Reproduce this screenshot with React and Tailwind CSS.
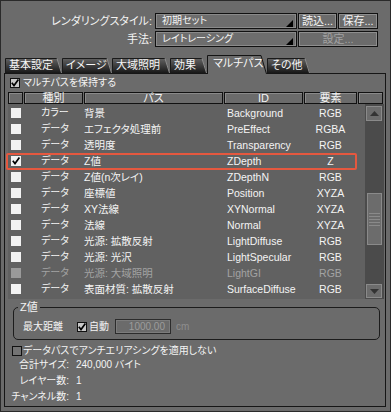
import React from "react";

const rows = [
  { kind: "カラー", pass: "背景", id: "Background", el: "RGB" },
  { kind: "データ", pass: "エフェクタ処理前", id: "PreEffect", el: "RGBA" },
  { kind: "データ", pass: "透明度", id: "Transparency", el: "RGB" },
  { kind: "データ", pass: "Z値", id: "ZDepth", el: "Z", checked: true },
  { kind: "データ", pass: "Z値(n次レイ)", id: "ZDepthN", el: "RGB" },
  { kind: "データ", pass: "座標値", id: "Position", el: "XYZA" },
  { kind: "データ", pass: "XY法線", id: "XYNormal", el: "XYZA" },
  { kind: "データ", pass: "法線", id: "Normal", el: "XYZA" },
  { kind: "データ", pass: "光源: 拡散反射", id: "LightDiffuse", el: "RGB" },
  { kind: "データ", pass: "光源: 光沢", id: "LightSpecular", el: "RGB" },
  { kind: "データ", pass: "光源: 大域照明", id: "LightGI", el: "RGB", disabled: true },
  { kind: "データ", pass: "表面材質: 拡散反射", id: "SurfaceDiffuse", el: "RGB" },
];

const tabs = [
  { label: "基本設定", w: 57, cls: "w-[57px]" },
  { label: "イメージ", w: 50, cls: "w-[50px]" },
  { label: "大域照明", w: 58, cls: "w-[58px]" },
  { label: "効果", w: 37, cls: "w-[37px]" },
  { label: "マルチパス", w: 60, cls: "w-[60px]", active: true },
  { label: "その他", w: 43, cls: "w-[43px]" },
];

function CheckMark() {
  return (
    <svg width="10" height="10" viewBox="0 0 10 10" className="block">
      <path d="M1.8 4.8 L4 7.6 L8.4 1.6" fill="none" stroke="#000" strokeWidth="1.7" />
    </svg>
  );
}

function CheckBox({ checked }) {
  return (
    <div className="h-[10px] w-[10px] shrink-0 border border-[#111] bg-[#c9c9c9]">
      {checked ? (
        <div className="-ml-[1px] -mt-[1px]">
          <CheckMark />
        </div>
      ) : null}
    </div>
  );
}

function EmptyBox() {
  return <div className="h-[10px] w-[10px] shrink-0 border border-[#111] bg-[#737373]" />;
}

function ListBox({ checked, disabled }) {
  return (
    <div className={disabled ? "h-[10px] w-[10px] bg-[#9a9a9a]" : "h-[10px] w-[10px] bg-[#f2f2f2]"}>
      {checked ? <CheckMark /> : null}
    </div>
  );
}

function Btn({ className, children, disabled }) {
  return (
    <div
      className={
        "flex h-[16px] items-center justify-center border border-[#111] bg-[#6b6b6b] shadow-[inset_0_0_0_1px_#8e8e8e] " +
        (disabled ? "text-[#a2a2a2] " : "") +
        className
      }
    >
      {children}
    </div>
  );
}

function Dropdown({ text }) {
  return (
    <div className="ml-[2px] flex h-[16px] w-[142px] items-center justify-between border border-[#111] bg-[#6d6d6d] pl-[6px] pr-[3px] text-[10px] shadow-[inset_0_0_0_1px_#8a8a8a]">
      <span>{text}</span>
      <svg width="7" height="7" viewBox="0 0 7 7" className="mt-[5px] block">
        <path d="M7 0 L7 7 L0 7 Z" fill="#000" />
      </svg>
    </div>
  );
}

function Tab({ t }) {
  const h = t.active ? 19 : 15;
  return (
    <div
      className={
        "relative shrink-0 " +
        t.cls +
        (t.active ? " z-10 -mb-[1px] h-[19px] pl-[6px]" : " h-[15px] pl-[4px]")
      }
    >
      <svg width={t.w} height={h} viewBox={`0 0 ${t.w} ${h}`} className="absolute left-0 top-0 block">
        <defs>
          <linearGradient id="tg" x1="0" y1="0" x2="0" y2="1">
            <stop offset="0" stopColor="#646464" />
            <stop offset="1" stopColor="#181818" />
          </linearGradient>
        </defs>
        {t.active ? (
          <>
            <path d={`M0 ${h} L0 0 L${t.w - 6} 0 L${t.w} ${h} Z`} fill="#6b6b6b" />
            <path d={`M0.5 ${h} L0.5 0.5 L${t.w - 6} 0.5 L${t.w - 0.5} ${h}`} fill="none" stroke="#141414" strokeWidth="1" />
          </>
        ) : (
          <>
            <path d={`M0 ${h} L0 0 L${t.w - 5} 0 L${t.w} ${h} Z`} fill="url(#tg)" />
            <path d={`M0.5 ${h} L0.5 0.5 L${t.w - 5} 0.5`} fill="none" stroke="#1a1a1a" strokeWidth="1" />
            <path d={`M${t.w - 5} 0.5 L${t.w - 0.5} ${h}`} fill="none" stroke="#8c8c8c" strokeWidth="1" />
          </>
        )}
      </svg>
      <div className={"relative flex h-full items-center text-[#f6f6f6]" + (t.active ? " pb-[2px]" : "")}>{t.label}</div>
    </div>
  );
}

function HeadCell({ className, children }) {
  return (
    <div
      className={
        "flex h-[12px] items-center justify-center border border-[#111] bg-[#6b6b6b] shadow-[inset_1px_1px_0_#8a8a8a] " +
        className
      }
    >
      {children}
    </div>
  );
}

function Arrow({ up }) {
  return (
    <svg width="9" height="5" viewBox="0 0 9 5" className="block">
      {up ? <path d="M0 5 L4.5 0 L9 5 Z" fill="#333" /> : <path d="M0 0 L4.5 5 L9 0 Z" fill="#333" />}
    </svg>
  );
}

export default function App() {
  return (
    <div className="h-[412px] w-[391px] overflow-hidden border border-[#2a2a2a] bg-[#6b6b6b] font-['Liberation_Sans','Noto_Sans_CJK_JP',sans-serif] text-[11px] leading-none text-[#f4f4f4] [font-feature-settings:'palt']">
      {/* top controls */}
      <div className="flex flex-col gap-[2px] pt-[12px]">
        <div className="flex h-[16px] items-center">
          <div className="w-[152px] pr-[1px] text-right">レンダリングスタイル:</div>
          <Dropdown text="初期セット" />
          <Btn className="ml-[1px] w-[39px]">読込...</Btn>
          <Btn className="ml-[1px] w-[40px]">保存...</Btn>
        </div>
        <div className="flex h-[16px] items-center">
          <div className="w-[152px] pr-[1px] text-right">手法:</div>
          <Dropdown text="レイトレーシング" />
          <Btn className="ml-[1px] w-[80px]" disabled>
            設定...
          </Btn>
        </div>
      </div>

      {/* tabs */}
      <div className="mt-[8px] flex h-[18px] items-end pl-[4px]">
        {tabs.map((t) => (
          <Tab key={t.label} t={t} />
        ))}
      </div>

      {/* panel */}
      <div className="ml-[3px] flex h-[334px] w-[382px] flex-col border border-[#161616] text-[10px]">
        <div className="ml-[5px] mt-[3px] flex h-[12px] items-center gap-[3px]">
          <CheckBox checked />
          <span>マルチパスを保持する</span>
        </div>

        {/* header */}
        <div className="ml-[3px] mt-[3px] flex gap-[1px] text-[11px]">
          <HeadCell className="w-[15px]" />
          <HeadCell className="w-[59px]">種別</HeadCell>
          <HeadCell className="w-[139px]">パス</HeadCell>
          <HeadCell className="w-[79px]">ID</HeadCell>
          <HeadCell className="w-[53px]">要素</HeadCell>
          <HeadCell className="w-[25px]" />
        </div>

        {/* list */}
        <div className="ml-[3px] flex h-[195px] w-[376px] text-[10.5px]">
          <div className="relative w-[357px] bg-[#616161] pt-[1px]">
            {rows.map((r) => (
              <div
                key={r.id}
                className={"flex h-[16px] items-center" + (r.disabled ? " text-[#a3a3a3]" : "")}
              >
                <div className="w-[16px] pl-[3px]">
                  <ListBox checked={r.checked} disabled={r.disabled} />
                </div>
                <div className="w-[60px] pl-[17px] text-[10px]">{r.kind}</div>
                <div className="w-[143px]">{r.pass}</div>
                <div className="w-[77px]">{r.id}</div>
                <div className="w-[53px] text-center">{r.el}</div>
              </div>
            ))}
            <div className="absolute left-[-2px] top-[49px] h-[17px] w-[351px] rounded-[2px] border-2 border-[#e5583f]" />
          </div>
          <div className="flex w-[19px] flex-col items-start bg-[#4b4b4b] pl-[1px]">
            <div className="mt-[2px] flex h-[15px] w-[16px] items-center justify-center border border-[#8a8a8a] bg-[#6c6c6c]">
              <Arrow up />
            </div>
            <div className="ml-[1px] mt-[72px] flex h-[52px] w-[15px] flex-col items-center justify-center gap-[2px] border border-[#8a8a8a] bg-[#6c6c6c]">
              <div className="h-px w-[11px] bg-[#8a8a8a]" />
              <div className="h-px w-[11px] bg-[#8a8a8a]" />
              <div className="h-px w-[11px] bg-[#8a8a8a]" />
              <div className="h-px w-[11px] bg-[#8a8a8a]" />
              <div className="h-px w-[11px] bg-[#8a8a8a]" />
            </div>
            <div className="mb-[1px] mt-auto flex h-[14px] w-[16px] items-center justify-center border border-[#8a8a8a] bg-[#6c6c6c]">
              <Arrow />
            </div>
          </div>
        </div>

        {/* Z group */}
        <fieldset className="ml-[8px] mt-[1px] w-[367px] rounded-[5px] border border-[#1c1c1c] pb-[5px]">
          <legend className="ml-[4px] px-[2px] leading-[14px] text-[11px]">Z値</legend>
          <div className="mt-[5px] flex h-[15px] items-center pl-[9px]">
            <span className="w-[54px]">最大距離</span>
            <CheckBox checked />
            <span className="ml-[2px] w-[26px]">自動</span>
            <div className="flex h-[15px] w-[56px] items-center justify-end border border-[#2c2c2c] bg-[#6b6b6b] pr-[5px] text-[#9c9c9c] shadow-[inset_0_0_0_1px_#7c7c7c]">
              1000.00
            </div>
            <span className="ml-[5px] text-[#8e8e8e]">cm</span>
          </div>
        </fieldset>

        <div className="ml-[7px] mt-[5px] flex h-[12px] items-center gap-[1px]">
          <EmptyBox />
          <span>データパスでアンチエリアシングを適用しない</span>
        </div>

        <div className="flex h-[16px] items-center">
          <span className="w-[64px] text-right">合計サイズ:</span>
          <span className="ml-[7px]">240,000 バイト</span>
        </div>
        <div className="flex h-[16px] items-center">
          <span className="w-[64px] text-right">レイヤー数:</span>
          <span className="ml-[7px]">1</span>
        </div>
        <div className="flex h-[16px] items-center">
          <span className="w-[64px] text-right">チャンネル数:</span>
          <span className="ml-[7px]">1</span>
        </div>
      </div>
    </div>
  );
}
